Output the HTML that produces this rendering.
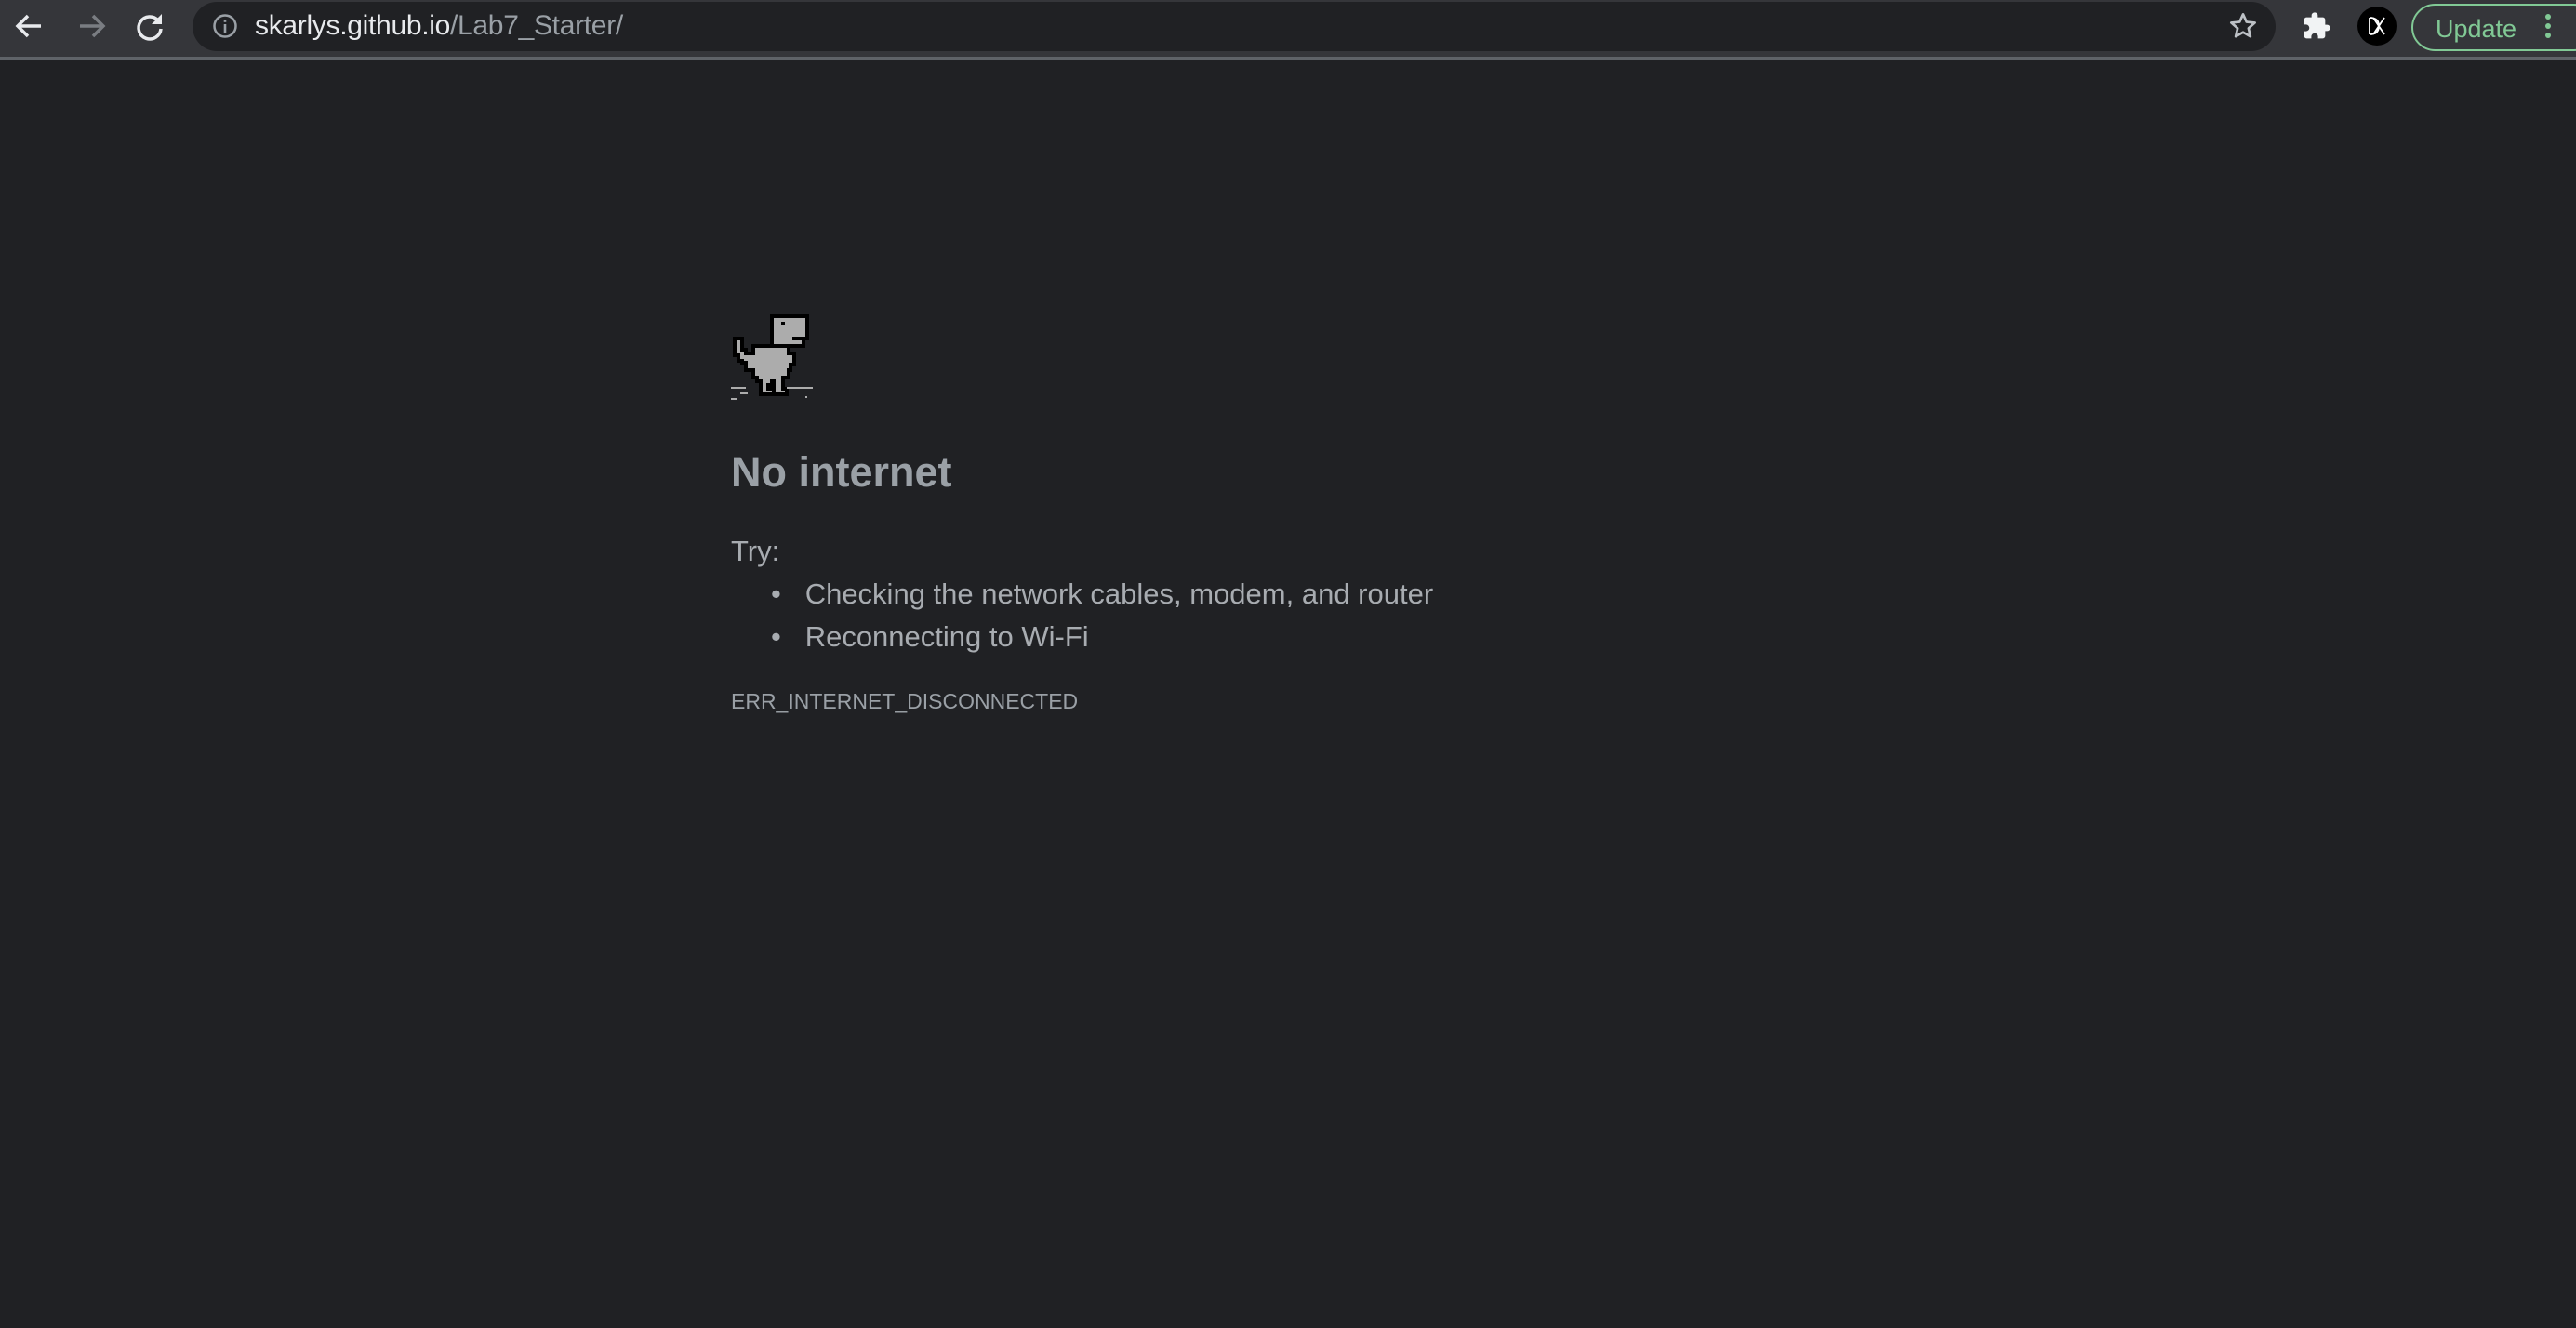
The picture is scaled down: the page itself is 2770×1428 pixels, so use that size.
<!DOCTYPE html>
<html><head><meta charset="utf-8"><style>
*{margin:0;padding:0;box-sizing:border-box}
body{width:2770px;height:1428px;background:#202124;font-family:"Liberation Sans",sans-serif;overflow:hidden;position:relative}
.tb{position:absolute;left:0;top:0;width:2770px;height:64px;background:#35363a;border-bottom:3px solid #5f6368}
.omni{position:absolute;left:207px;top:2px;width:2240px;height:53px;background:#202124;border-radius:27px}
.url{position:absolute;left:274px;top:11px;font-size:30px;color:#e8eaed;white-space:nowrap;letter-spacing:-0.3px}
.url span{color:#9aa0a6}
.abs{position:absolute}
.h{position:absolute;left:786px;top:482px;font-size:45px;font-weight:bold;color:#9aa0a6}
.t{position:absolute;font-size:31px;color:#a8acb1}
.err{position:absolute;left:786px;top:741px;font-size:23px;color:#9aa0a6}
.upd{position:absolute;left:2593px;top:4px;width:200px;height:51px;border:2px solid #81c995;border-radius:26px;color:#81c995;font-size:27px;padding:10px 0 0 24px}
</style></head><body>
<div class="tb"></div>
<div class="omni"></div>
<svg class="abs" style="left:14px;top:12px" width="36" height="32" viewBox="0 0 36 32"><path d="M30 16H6M16 5L5 16l11 11" stroke="#e8eaed" stroke-width="3.5" fill="none"/></svg>
<svg class="abs" style="left:80px;top:12px" width="36" height="32" viewBox="0 0 36 32"><path d="M6 16h24M20 5l11 11-11 11" stroke="#7a7d82" stroke-width="3.5" fill="none"/></svg>
<svg class="abs" style="left:144px;top:12px" width="34" height="34" viewBox="0 0 34 34"><path d="M26 10A12 12 0 1 0 29 19" stroke="#e8eaed" stroke-width="3.5" fill="none"/><path d="M30 3v11H19z" fill="#e8eaed"/></svg>
<svg class="abs" style="left:228px;top:14px" width="28" height="28" viewBox="0 0 28 28"><circle cx="14" cy="14" r="11.5" stroke="#9aa0a6" stroke-width="2.5" fill="none"/><rect x="12.7" y="12" width="2.6" height="9" fill="#9aa0a6"/><rect x="12.7" y="7" width="2.6" height="2.8" fill="#9aa0a6"/></svg>
<div class="url">skarlys.github.io<span>/Lab7_Starter/</span></div>
<svg class="abs" style="left:2396px;top:12px" width="32" height="32" viewBox="0 0 24 24"><path d="M12 2.5l2.8 6.2 6.7.6-5.1 4.5 1.5 6.6L12 17l-5.9 3.4 1.5-6.6-5.1-4.5 6.7-.6z" stroke="#bdc1c6" stroke-width="2" fill="none" stroke-linejoin="round"/></svg>
<svg class="abs" style="left:2475px;top:12px" width="32" height="32" viewBox="0 0 24 24"><path d="M20.5 11H19V7c0-1.1-.9-2-2-2h-4V3.5a2.5 2.5 0 0 0-5 0V5H4c-1.1 0-2 .9-2 2v3.8h1.5a2.7 2.7 0 0 1 0 5.4H2V20c0 1.1.9 2 2 2h3.8v-1.5a2.7 2.7 0 0 1 5.4 0V22H17c1.1 0 2-.9 2-2v-4h1.5a2.5 2.5 0 0 0 0-5z" fill="#f1f3f4"/></svg>
<svg class="abs" style="left:2534px;top:6px" width="44" height="44" viewBox="0 0 44 44"><circle cx="22" cy="22" r="21" fill="#000"/><path d="M14 13v18M14 13c8 0 10 4 10 9s-2 9-10 9M18 13l12 18M30 13L18 31" stroke="#fff" stroke-width="1.8" fill="none"/></svg>
<div class="upd">Update</div>
<svg class="abs" style="left:2733px;top:14px" width="14" height="30" viewBox="0 0 14 30"><circle cx="7" cy="4" r="3" fill="#81c995"/><circle cx="7" cy="14" r="3" fill="#81c995"/><circle cx="7" cy="24" r="3" fill="#81c995"/></svg>

<svg class="abs" style="left:786px;top:336px" width="96" height="96" viewBox="0 0 96 96">
<g fill="#000" stroke="#000" stroke-width="8" stroke-linejoin="miter">
<rect x="46" y="6" width="34" height="20"/><rect x="46" y="26" width="20" height="4"/><rect x="46" y="30" width="30" height="4"/>
<rect x="6" y="30" width="4" height="14"/><rect x="10" y="42" width="4" height="8"/><rect x="14" y="46" width="4" height="6"/>
<rect x="18" y="46" width="48" height="4"/><rect x="26" y="38" width="34" height="30"/><rect x="18" y="50" width="44" height="10"/>
<rect x="60" y="46" width="6" height="8"/><rect x="30" y="68" width="24" height="4"/>
<rect x="34" y="72" width="8" height="4"/><rect x="34" y="76" width="4" height="10"/><rect x="38" y="84" width="6" height="2"/>
<rect x="48" y="72" width="6" height="14"/><rect x="54" y="84" width="4" height="2"/>
</g>
<g fill="#acacac">
<rect x="46" y="6" width="34" height="20"/><rect x="46" y="26" width="20" height="4"/><rect x="46" y="30" width="30" height="4"/>
<rect x="6" y="30" width="4" height="14"/><rect x="10" y="42" width="4" height="8"/><rect x="14" y="46" width="4" height="6"/>
<rect x="18" y="46" width="48" height="4"/><rect x="26" y="38" width="34" height="30"/><rect x="18" y="50" width="44" height="10"/>
<rect x="60" y="46" width="6" height="8"/><rect x="30" y="68" width="24" height="4"/>
<rect x="34" y="72" width="8" height="4"/><rect x="34" y="76" width="4" height="10"/><rect x="38" y="84" width="6" height="2"/>
<rect x="48" y="72" width="6" height="14"/><rect x="54" y="84" width="4" height="2"/>
</g>
<rect x="54" y="10" width="4" height="4" fill="#000"/>
<rect x="0" y="80" width="16" height="2" fill="#acacac"/><rect x="60" y="80" width="28" height="2" fill="#acacac"/>
<rect x="10" y="86" width="8" height="2" fill="#acacac"/><rect x="0" y="92" width="6" height="2" fill="#acacac"/><rect x="80" y="90" width="2" height="2" fill="#acacac"/>
</svg>
<div class="h">No internet</div>
<div class="t" style="left:786px;top:575px">Try:</div>
<div class="t" style="left:829px;top:621px">•&nbsp;&nbsp;&nbsp;Checking the network cables, modem, and router</div>
<div class="t" style="left:829px;top:667px">•&nbsp;&nbsp;&nbsp;Reconnecting to Wi-Fi</div>
<div class="err">ERR_INTERNET_DISCONNECTED</div>
</body></html>
